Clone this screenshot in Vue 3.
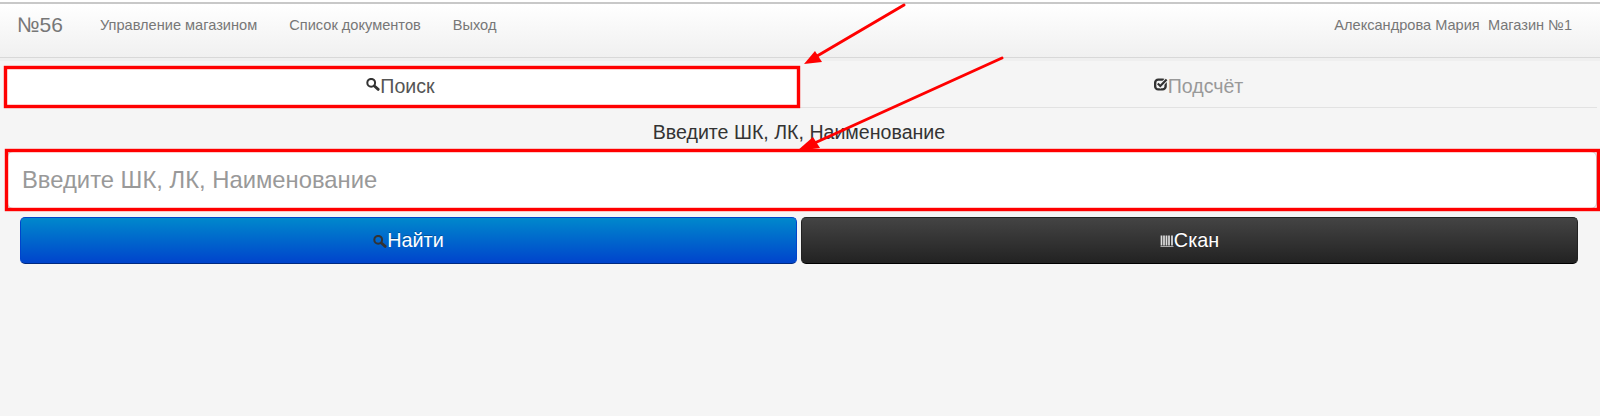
<script setup>
const links = ['Управление магазином', 'Список документов', 'Выход']
</script>

<template>
  <div class="page">
    <div class="strip"></div>
    <nav class="navbar">
      <span class="brand">№56</span>
      <a v-for="l in links" :key="l" class="link">{{ l }}</a>
      <span class="user">Александрова Мария&nbsp;&nbsp;Магазин №1</span>
    </nav>
    <div class="tabs">
      <div class="tab active">
        <svg class="ico" viewBox="0 0 14 13" width="14" height="13"><circle cx="5.2" cy="4.8" r="3.9" fill="none" stroke="#333" stroke-width="2"/><path d="M8.4 8L12.2 11.4" stroke="#333" stroke-width="2.8" stroke-linecap="round"/></svg>
        <span>Поиск</span>
      </div>
      <div class="tab">
        <svg class="ico" viewBox="0 0 14 13" width="14" height="13"><rect x="1.2" y="1.6" width="10.4" height="9.8" rx="3" fill="none" stroke="#333" stroke-width="2.4"/><path d="M3.8 5.4L6.3 8L12.6 1.6" fill="none" stroke="#f5f5f5" stroke-width="4"/><path d="M3.8 5.4L6.3 8L12.6 1.6" fill="none" stroke="#333" stroke-width="2.2"/></svg>
        <span>Подсчёт</span>
      </div>
    </div>
    <div class="label">Введите ШК, ЛК, Наименование</div>
    <input class="field" placeholder="Введите ШК, ЛК, Наименование" />
    <div class="buttons">
      <button class="btn blue">
        <svg class="ico" viewBox="0 0 14 13" width="14" height="13"><circle cx="5.2" cy="4.8" r="3.9" fill="none" stroke="#333" stroke-width="2"/><path d="M8.4 8L12.2 11.4" stroke="#333" stroke-width="2.8" stroke-linecap="round"/></svg>
        <span>Найти</span>
      </button>
      <button class="btn dark">
        <svg class="ico" viewBox="0 0 14 13" width="14" height="13"><path d="M1.5 0.5V10.5M4 0.5V10.5M6.5 0.5V10.5M9 0.5V10.5M12 0.5V10.5" stroke="#ddd" stroke-width="1.7" fill="none"/><path d="M0.5 11.5H13.5" stroke="#aaa" stroke-width="1"/></svg>
        <span>Скан</span>
      </button>
    </div>
    <svg class="marks" width="1600" height="416" viewBox="0 0 1600 416">
      <rect x="5.5" y="67.5" width="793" height="39" fill="none" stroke="#f00" stroke-width="3.4"/>
      <rect x="6.5" y="150.5" width="1592" height="59" fill="none" stroke="#f00" stroke-width="3.4"/>
      <path d="M904 5L812 59" stroke="#f00" stroke-width="3" stroke-linecap="round"/>
      <path d="M804 64L815 51L822 62Z" fill="#f00"/>
      <path d="M1002 58L808 146" stroke="#f00" stroke-width="3" stroke-linecap="round"/>
      <path d="M797 151L813 137L820 148Z" fill="#f00"/>
    </svg>
  </div>
</template>

<style scoped>
.page {
  position: relative;
  width: 1600px;
  height: 416px;
  overflow: hidden;
  background: #f5f5f5;
  font-family: "Liberation Sans", Arial, sans-serif;
}
.strip { height: 2px; background: #fff; }
.navbar {
  height: 56px;
  box-sizing: border-box;
  display: flex;
  align-items: center;
  padding: 0 28px 12px 17px;
  border-top: 2px solid #c8c8c8;
  border-bottom: 1px solid #d8d8d8;
  background: linear-gradient(#fff, #f0f0f0);
  box-shadow: 0 3px 0 #efefef;
  color: #777;
  font-size: 14.6px;
}
.brand { font-size: 21px; margin-right: 37px; }
.link { margin-right: 32px; }
.user { margin-left: auto; }
.tabs {
  margin: 8px 3px 0 4px;
  display: flex;
  height: 41px;
  border-bottom: 1px solid #e2e2e2;
  font-size: 19.6px;
}
.tab {
  flex: 1 0 796px;
  display: flex;
  align-items: center;
  justify-content: center;
  color: #999;
}
.tab.active { flex: 0 0 796px; background: #fff; color: #555; padding-right: 3px; box-sizing: border-box; }
.tab .ico { position: relative; top: -2px; }
.ico { flex: none; }
.label {
  margin-top: 14px;
  padding-right: 2px;
  text-align: center;
  font-size: 19.6px;
  line-height: 20px;
  color: #333;
}
.field {
  display: block;
  box-sizing: border-box;
  width: 1590px;
  height: 58px;
  margin: 9px 0 0 7px;
  padding: 0 14px;
  border: 1px solid #ccc;
  border-radius: 6px;
  background: #fff;
  font: 23.8px "Liberation Sans", Arial, sans-serif;
  color: #555;
  outline: none;
}
.field::placeholder { color: #999; opacity: 1; }
.buttons {
  display: flex;
  gap: 4px;
  margin: 8px 22px 0 20px;
}
.btn {
  flex: 1;
  height: 47px;
  display: flex;
  align-items: center;
  justify-content: center;
  border-radius: 5px;
  color: #fff;
  font: 19.8px "Liberation Sans", Arial, sans-serif;
  text-shadow: 0 -1px 0 rgba(0, 0, 0, 0.25);
  padding: 0;
  border: 1px solid;
}
.btn .ico { position: relative; top: 1px; }
.blue { background: linear-gradient(#0088cc, #0044cc); border-color: #04c #04c #002a80; }
.dark { background: linear-gradient(#444, #222); border-color: #222 #222 #000; }
.marks { position: absolute; inset: 0; pointer-events: none; }
</style>
